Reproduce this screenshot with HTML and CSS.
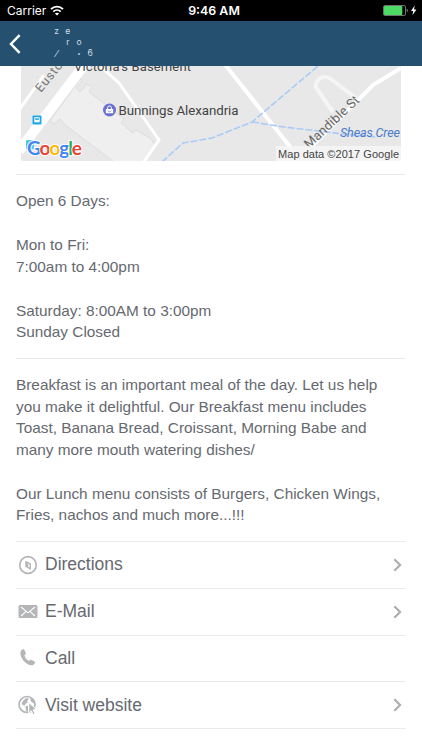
FILE: index.html
```html
<!DOCTYPE html>
<html lang="en">
<head>
    <meta charset="UTF-8">
    <meta name="viewport" content="width=device-width, initial-scale=1.0">
    <title>Zero.6</title>
    <link rel="stylesheet" href="styles.css">
</head>
<body>
    <div class="status-bar">
        <div class="carrier">
            <span>Carrier</span>
            <svg width="14" height="11" viewBox="0 0 14 11" fill="none" stroke="#fff" stroke-width="1.9">
                <path d="M1 4.2C4.4.8 9.6.8 13 4.2"/>
                <path d="M3.3 6.6c2.1-2 5.3-2 7.4 0"/>
                <path d="M7 10.6 4.9 8.5c1.2-1.1 3-1.1 4.2 0z" fill="#fff" stroke="none"/>
            </svg>
        </div>
        <div class="time">9:46 AM</div>
        <div class="battery">
            <svg width="34" height="11" viewBox="0 0 34 11">
                <rect x=".5" y=".5" width="22" height="10" rx="1.5" fill="none" stroke="#8d8d8d" stroke-width=".8"/>
                <rect x="1" y="1" width="18.3" height="9" rx=".8" fill="#4cd964"/>
                <path d="M23.7 3.8c1.5.4 1.5 3 0 3.4z" fill="#8d8d8d"/>
                <path d="M31.7.6 28 6h2.3l-.9 4.2 4-5.8H31z" fill="#fff"/>
            </svg>
        </div>
    </div>

    <header class="navbar">
        <svg class="back" width="12" height="20" viewBox="0 0 12 20" fill="none" stroke="#fff" stroke-width="2.5">
            <path d="M10.6 1.2 2 10l8.6 8.8"/>
        </svg>
        <div class="logo">
            <span>z</span><span>e</span><span></span><span></span>
            <span></span><span>r</span><span>o</span><span></span>
            <span class="slash">⁄</span><span></span><span class="dot">•</span><span>6</span>
        </div>
    </header>

    <main class="content">
        <div class="map">
            <svg width="380" height="95" viewBox="21 66 380 95">
                <rect x="21" y="66" width="380" height="95" fill="#e8e8e8"/>
                <!-- building -->
                <path d="M81 78 50 121l4 3 6-5 5 6 57 43h20l13-23 -4-6-15-9-3 3-12-10 3-4-31-24-4-3 3-5-5-3-7 8-4-4 6-7z" fill="#efefef" stroke="#dcdcdc"/>
                <!-- roads -->
                <g fill="none" stroke="#fff">
                    <path d="M44 75 17 113" stroke-width="3"/>
                    <path d="M88 60 19 151" stroke-width="10"/>
                    <path d="m101 67 18 16 40 57-18 26" stroke-width="3"/>
                    <path d="m223 62 72 91" stroke-width="4"/>
                    <path d="m401 68-28 17-65 65" stroke-width="4"/>
                    <path d="m333 112-16-23c-5-8 7-16 14-10l26 20" stroke="#f5f5f5" stroke-width="4"/>
                </g>
                <!-- creek -->
                <g fill="none" stroke="#aacbf7" stroke-width="1.6" stroke-dasharray="7 2">
                    <path d="m162 162 21-19 29-5 40-16 66-56"/>
                    <path d="m252 122 32 5 60 7 32 3"/>
                </g>
                <g class="map-label">
                    <text x="74" y="71" font-size="13" textLength="117">Victoria's Basement</text>
                    <text x="118.500" y="114.500" font-size="13.3" textLength="120">Bunnings Alexandria</text>
                    <text transform="translate(41 93) rotate(-51)" font-size="12.5" fill="#777" textLength="43">Euston</text>
                    <text transform="translate(309 149) rotate(-43)" font-size="13" fill="#666" textLength="70">Mandible St</text>
                    <text class="creek-name" transform="translate(340 137)" font-size="12.6" textLength="60">Sheas Cree</text>
                </g>
                <!-- shop pin -->
                <circle cx="109.5" cy="110" r="6.5" fill="#6870cf"/>
                <path d="M105.8 109h7.4v4.2h-7.4z" fill="#fff"/>
                <path d="M107.6 109v-1.2a1.9 1.9 0 0 1 3.8 0v1.2" fill="none" stroke="#fff"/>
                <path d="M107.8 110.5c.6 1.7 2.8 1.7 3.4 0" fill="none" stroke="#6870cf" stroke-width=".7"/>
                <!-- bus stop -->
                <rect x="32.5" y="115.5" width="9" height="9" rx="1" fill="#20a9ed"/>
                <rect x="34.3" y="117.3" width="5.4" height="5" rx=".6" fill="#fff"/>
                <rect x="35.2" y="118.3" width="3.6" height="1.6" fill="#20a9ed"/>
                <rect x="26" y="140" width="8" height="9" rx="1" fill="#54c4ef"/>
                <text class="google" x="27" y="154.5" textLength="55"><tspan fill="#4285f4">G</tspan><tspan fill="#ea4335">o</tspan><tspan fill="#fbbc05">o</tspan><tspan fill="#4285f4">g</tspan><tspan fill="#34a853">l</tspan><tspan fill="#ea4335">e</tspan></text>
                <rect x="276" y="146" width="125" height="15" fill="#f5f5f5" fill-opacity=".88"/>
                <text class="copyright" x="278" y="157.5" textLength="121">Map data ©2017 Google</text>
            </svg>
        </div>

        <section class="hours">
            <p>Open 6 Days:</p>
            <p>Mon to Fri:<br>7:00am to 4:00pm</p>
            <p>Saturday: 8:00AM to 3:00pm<br>Sunday Closed</p>
        </section>

        <section class="about">
            <p>Breakfast is an important meal of the day. Let us help<br>you make it delightful. Our Breakfast menu includes<br>Toast, Banana Bread, Croissant, Morning Babe and<br>many more mouth watering dishes/</p>
            <p>Our Lunch menu consists of Burgers, Chicken Wings,<br>Fries, nachos and much more...!!!</p>
        </section>

        <nav class="links">
            <a class="link">
                <svg class="icon" width="20" height="20" viewBox="0 0 20 20" fill="none" stroke="#b4b5b7">
                    <circle cx="10" cy="10" r="8.3" stroke-width="1.7"/>
                    <path d="m8 6.8 4.200 2v5L8 11.300z" stroke-width="1.4"/>
                    <path d="M8 7v4.500l2.200 1V9z" fill="#b4b5b7" stroke="none"/>
                </svg>
                <span>Directions</span>
                <svg class="chevron" width="9" height="14" viewBox="0 0 9 14"><path d="m1.3 1.2 5.8 5.8-5.8 5.8"/></svg>
            </a>
            <a class="link">
                <svg class="icon" width="20" height="20" viewBox="0 0 20 20">
                    <rect x=".5" y="3" width="19" height="13" rx="1.5" fill="#b4b5b7"/>
                    <path d="m3 5 7 5.8L17 5M3 14l4.8-4.4M17 14l-4.8-4.4" fill="none" stroke="#fff" stroke-width="1.1"/>
                </svg>
                <span>E-Mail</span>
                <svg class="chevron" width="9" height="14" viewBox="0 0 9 14"><path d="m1.3 1.2 5.8 5.8-5.8 5.8"/></svg>
            </a>
            <a class="link">
                <svg class="icon" width="20" height="20" viewBox="0 0 20 20" fill="#b4b5b7">
                    <path d="M3 2.8C4.2 1 6 .9 6.700 2.400l1 2.600c.3 1-.1 1.600-1.300 2.300.5 2.600 2.300 4.700 4.800 5.600.8-1.100 1.500-1.400 2.400-.9l2.600 1.300c1.400.8 1 2.300-.7 3.500-2.300 1.500-6.400-.3-9.400-3.600C2.900 10 1.600 5.600 3 2.800z"/>
                </svg>
                <span>Call</span>
            </a>
            <a class="link">
                <svg class="icon" width="20" height="20" viewBox="0 0 20 20">
                    <circle cx="9" cy="9.5" r="8" fill="none" stroke="#b4b5b7" stroke-width="1.7"/>
                    <path d="m5.500 5.500 2-2 3-.5-.3 2-1.200 1 .8 1.500-2 1-1 2-2.300-.5L3.500 8zM12.500 2.800l3 2.700.5 3-2-1-1.500-2zM7.500 11l2.500-.3v6l-1.500-.2-.8-2.500z" fill="#b4b5b7"/>
                    <path d="m10.800 7.600 7.900 6.900-3.600.3 2 3.900-1.900 1-1.900-3.900-2.500 2.400z" fill="#b4b5b7" stroke="#fff"/>
                </svg>
                <span>Visit website</span>
                <svg class="chevron" width="9" height="14" viewBox="0 0 9 14"><path d="m1.3 1.2 5.8 5.8-5.8 5.8"/></svg>
            </a>
        </nav>
    </main>
</body>
</html>
```
FILE: styles.css
```css
* {
    box-sizing: border-box;
}
body {
    margin: 0;
    height: 750px;
    overflow: hidden;
    background: #fff;
    color: #66696f;
    font-family: "Liberation Sans", Arial, sans-serif;
}
p {
    margin: 0 0 22.5px;
}
svg {
    display: block;
    flex-shrink: 0;
}
.status-bar {
    display: grid;
    grid-template-columns: 1fr auto 1fr;
    align-items: center;
    height: 21px;
    padding: 0 5px 0 7px;
    background: #000;
    color: #fff;
    font-family: Inter, sans-serif;
    font-size: 12.4px;
}
.carrier {
    display: flex;
    align-items: center;
    gap: 4px;
    font-size: 12px;
}
.time {
    padding-left: 4px;
    font-weight: 600;
}
.battery {
    justify-self: end;
}
.navbar {
    display: flex;
    align-items: center;
    height: 45px;
    padding-left: 9px;
    background: #25506f;
}
.logo {
    display: grid;
    grid-template-columns: repeat(4, 11.2px);
    grid-auto-rows: 11.2px;
    margin: -2px 0 0 30px;
    color: #d3dde5;
    font-family: Inter, sans-serif;
    font-size: 8.5px;
    line-height: 11px;
    text-align: center;
}
.logo .slash {
    font-size: 9px;
}
.logo .dot {
    font-size: 6px;
}
.content {
    padding: 0 16px;
}
.map {
    height: 108px;
    padding: 0 5px;
}
.map svg {
    border-radius: 0 0 2px 2px;
}
.map-label {
    font-family: Roboto, sans-serif;
    fill: #444;
}
.creek-name {
    fill: #4c7ccb;
    font-style: italic;
}
.google {
    font-family: Lato, sans-serif;
    font-size: 19px;
    font-weight: 700;
    stroke: #fff;
    stroke-width: 2px;
    paint-order: stroke;
}
.copyright {
    font-size: 11px;
    fill: #444;
}
.hours,
.about,
.link {
    border-top: 1px solid #ebebec;
}
.hours,
.about {
    padding-top: 15px;
    font-size: 15.35px;
    line-height: 21.6px;
    white-space: nowrap;
}
.hours {
    height: 184px;
}
.about {
    height: 183px;
}
.link {
    display: flex;
    align-items: center;
    height: 46.8px;
    padding: 0 4px 0 2px;
    font-size: 17.5px;
}
.link:last-child {
    height: 47.8px;
    border-bottom: 1px solid #ebebec;
}
.icon {
    margin-right: 7px;
}
.chevron {
    margin-left: auto;
    fill: none;
    stroke: #adaeb0;
    stroke-width: 2.2;
}
```
